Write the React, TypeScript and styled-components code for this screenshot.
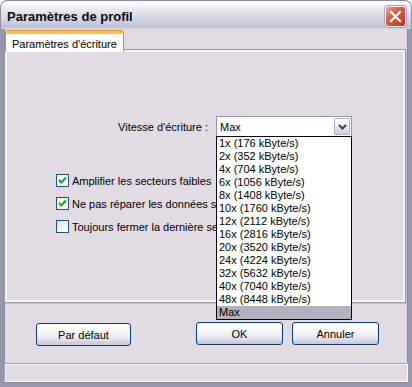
import React from 'react';
import styled, { createGlobalStyle } from 'styled-components';

const speeds = [
  '1x (176 kByte/s)',
  '2x (352 kByte/s)',
  '4x (704 kByte/s)',
  '6x (1056 kByte/s)',
  '8x (1408 kByte/s)',
  '10x (1760 kByte/s)',
  '12x (2112 kByte/s)',
  '16x (2816 kByte/s)',
  '20x (3520 kByte/s)',
  '24x (4224 kByte/s)',
  '32x (5632 kByte/s)',
  '40x (7040 kByte/s)',
  '48x (8448 kByte/s)',
  'Max',
];

const options = [
  { label: 'Amplifier les secteurs faibles', checked: true },
  { label: 'Ne pas réparer les données sur CD', checked: true },
  { label: 'Toujours fermer la dernière session', checked: false },
];

const App = () => (
  <Window>
    <GlobalStyle />
    <TitleBar>
      <Title>Paramètres de profil</Title>
      <CloseButton aria-label="Fermer">
        <svg width="13" height="13" viewBox="0 0 13 13">
          <path d="M2 2 L11 11 M11 2 L2 11" stroke="#fff" strokeWidth="2.2" strokeLinecap="square" />
        </svg>
      </CloseButton>
    </TitleBar>
    <Client>
      <TabStrip>
        <Tab>Paramètres d'écriture</Tab>
      </TabStrip>
      <Panel>
        <SpeedRow>
          <SpeedLabel>Vitesse d'écriture :</SpeedLabel>
          <Combo>
            <ComboValue>Max</ComboValue>
            <ComboArrow>
              <svg width="9" height="6" viewBox="0 0 9 6">
                <path d="M1 1 L4.5 4.5 L8 1" fill="none" stroke="#3c3c4c" strokeWidth="2" />
              </svg>
            </ComboArrow>
            <List>
              {speeds.map((s) => (
                <ListItem key={s} selected={s === 'Max'}>
                  {s}
                </ListItem>
              ))}
            </List>
          </Combo>
        </SpeedRow>
        <Checks>
          {options.map((o) => (
            <CheckRow key={o.label}>
              <Box checked={o.checked}>
                {o.checked && (
                  <svg width="11" height="11" viewBox="0 0 11 11">
                    <path d="M2 5 L4.3 7.5 L9 2.5" fill="none" stroke="#21a121" strokeWidth="2.2" />
                  </svg>
                )}
              </Box>
              <CheckText>{o.label}</CheckText>
            </CheckRow>
          ))}
        </Checks>
      </Panel>
      <ButtonRow>
        <Button wide>Par défaut</Button>
        <Spacer />
        <Button>OK</Button>
        <Button>Annuler</Button>
      </ButtonRow>
      <StatusBox />
    </Client>
  </Window>
);

const GlobalStyle = createGlobalStyle`
  html, body {
    margin: 0;
    padding: 0;
    background: #ffffff;
  }
  body {
    font-family: 'Liberation Sans', Arial, sans-serif;
    font-size: 11px;
    color: #000;
  }
`;

const Window = styled.div`
  width: 412px;
  height: 387px;
  display: flex;
  flex-direction: column;
  box-sizing: border-box;
`;

const TitleBar = styled.div`
  height: 29px;
  flex: none;
  box-sizing: border-box;
  border-radius: 7px 7px 0 0;
  border: 1px solid #8d8ca2;
  border-bottom: none;
  background: linear-gradient(
    to bottom,
    #ffffff 0%,
    #f4f4f8 12%,
    #e3e3ec 40%,
    #d3d2e0 70%,
    #c2c1d3 92%,
    #d6d5e2 100%
  );
  display: flex;
  align-items: center;
  justify-content: space-between;
  padding: 0 5px 0 6px;
`;

const Title = styled.div`
  font-family: 'Liberation Sans', Arial, sans-serif;
  font-weight: bold;
  font-size: 13px;
  color: #0a0a14;
  padding-top: 2px;
`;

const CloseButton = styled.div`
  width: 21px;
  height: 21px;
  box-sizing: border-box;
  border-radius: 3px;
  border: 1px solid #f4f2f6;
  background: linear-gradient(135deg, #f2a08e 0%, #e0624c 35%, #cd4530 75%, #b9331f 100%);
  box-shadow: 0 0 0 1px #a9a6bb;
  display: flex;
  align-items: center;
  justify-content: center;
  margin-top: 2px;
`;

const Client = styled.div`
  flex: 1;
  display: flex;
  flex-direction: column;
  background: #e3dbe3;
  border: 4px solid #9896ad;
  border-top: none;
  box-shadow: inset 1px 0 0 #8a899e, inset -1px 0 0 #8a899e, inset 0 -1px 0 #8a899e;
`;

const TabStrip = styled.div`
  display: flex;
  padding: 1px 0 0 1px;
  height: 21px;
  box-sizing: border-box;
`;

const Tab = styled.div`
  position: relative;
  z-index: 1;
  height: 21px;
  box-sizing: border-box;
  padding: 4px 6px 0 6px;
  background: #fcfcfe;
  border: 1px solid #9a98ac;
  border-bottom: none;
  border-top: 3px solid #ffc73c;
  border-radius: 3px 3px 0 0;
  box-shadow: 0 -1px 0 #e68b2c;
  margin-top: 1px;
  white-space: nowrap;
`;

const Panel = styled.div`
  height: 254px;
  box-sizing: border-box;
  margin-right: 2px;
  margin-top: -1px;
  border: 1px solid #9a98ac;
  box-shadow: inset 0 0 0 2px #f5f3f6, 1px 1px 0 #c2c0cf;
  padding: 2px;
  display: flex;
  flex-direction: column;
`;

const SpeedRow = styled.div`
  display: flex;
  align-items: center;
  margin-top: 64px;
`;

const SpeedLabel = styled.div`
  width: 209px;
  box-sizing: border-box;
  padding-right: 8px;
  text-align: right;
`;

const Combo = styled.div`
  position: relative;
  width: 136px;
  height: 21px;
  box-sizing: border-box;
  border: 1px solid #7f9db9;
  background: #fff;
  display: flex;
  align-items: center;
  justify-content: space-between;
  padding: 1px;
`;

const ComboValue = styled.div`
  padding-left: 2px;
`;

const ComboArrow = styled.div`
  width: 16px;
  height: 17px;
  box-sizing: border-box;
  border: 1px solid #b3b2c4;
  border-radius: 1px;
  background: linear-gradient(to bottom, #ffffff 0%, #e7e6ee 55%, #cfcedb 100%);
  display: flex;
  align-items: center;
  justify-content: center;
`;

const List = styled.div`
  position: absolute;
  z-index: 2;
  top: 100%;
  left: -1px;
  width: 136px;
  box-sizing: border-box;
  border: 1px solid #000;
  background: #fff;
`;

const ListItem = styled.div<{ selected?: boolean }>`
  height: 13px;
  line-height: 13px;
  padding-left: 2px;
  white-space: nowrap;
  background: ${(p) => (p.selected ? '#b2b1bf' : 'transparent')};
`;

const Checks = styled.div`
  display: flex;
  flex-direction: column;
  margin-top: 32px;
  padding-left: 49px;
`;

const CheckRow = styled.div`
  height: 23px;
  display: flex;
  align-items: center;
  gap: 3px;
`;

const Box = styled.div<{ checked?: boolean }>`
  width: 13px;
  height: 13px;
  box-sizing: border-box;
  border: 1px solid #1c5180;
  background: ${(p) =>
    p.checked
      ? 'linear-gradient(135deg, #eeeeea 0%, #ffffff 100%)'
      : 'linear-gradient(135deg, #d8d8d2 0%, #f4f4f2 60%, #ffffff 100%)'};
  display: flex;
  align-items: center;
  justify-content: center;
`;

const CheckText = styled.div`
  white-space: nowrap;
`;

const ButtonRow = styled.div`
  height: 60px;
  display: flex;
  align-items: flex-start;
  padding: 19px 29px 0 32px;
  box-sizing: border-box;
  gap: 9px;
`;

const Spacer = styled.div`
  flex: 1;
`;

const Button = styled.div<{ wide?: boolean }>`
  width: ${(p) => (p.wide ? '95px' : '87px')};
  height: 23px;
  margin-top: ${(p) => (p.wide ? '1px' : '0')};
  box-sizing: border-box;
  border: 1px solid #003c74;
  border-radius: 3px;
  background: linear-gradient(
    to bottom,
    #ffffff 0%,
    #f6f6f9 40%,
    #e6e5ee 70%,
    #d2d0df 90%,
    #c4c2d4 100%
  );
  display: flex;
  align-items: center;
  justify-content: center;
`;

const StatusBox = styled.div`
  height: 19px;
  box-sizing: border-box;
  border: 1px solid #a19fb3;
  border-right-color: #fbfafc;
  border-bottom-color: #fbfafc;
  box-shadow: inset 1px 1px 0 #f4f2f5;
`;

export default App;
